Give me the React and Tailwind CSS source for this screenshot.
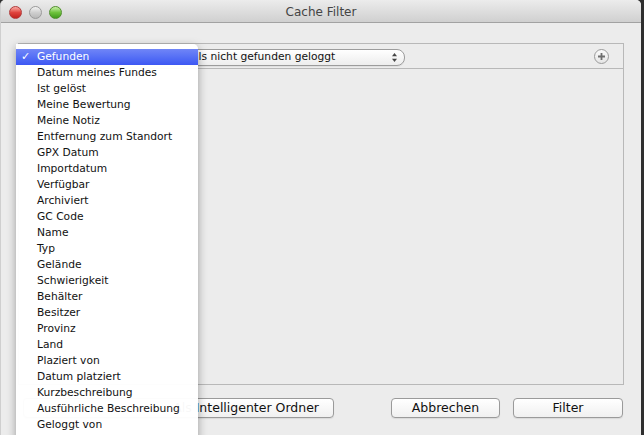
const items = [
  "Gefunden",
  "Datum meines Fundes",
  "Ist gelöst",
  "Meine Bewertung",
  "Meine Notiz",
  "Entfernung zum Standort",
  "GPX Datum",
  "Importdatum",
  "Verfügbar",
  "Archiviert",
  "GC Code",
  "Name",
  "Typ",
  "Gelände",
  "Schwierigkeit",
  "Behälter",
  "Besitzer",
  "Provinz",
  "Land",
  "Plaziert von",
  "Datum platziert",
  "Kurzbeschreibung",
  "Ausführliche Beschreibung",
  "Geloggt von",
];

export default function App() {
  return (
    <div className="w-[644px] h-[435px] overflow-hidden bg-[#2f2f2f] relative font-['DejaVu_Sans',sans-serif]">
      <div className="w-[641px] h-[435px] bg-[#ececec] rounded-t-[5px] flex flex-col overflow-hidden border-l border-[#cfcfcf]">
        {/* Title bar */}
        <div className="h-[23px] shrink-0 bg-gradient-to-b from-[#ececec] to-[#d0d0d0] border-b border-[#a2a2a2] flex items-center relative">
          <div className="flex items-center gap-[7px] ml-[8px] mt-[2px]">
            <div className="w-[13px] h-[13px] rounded-full border border-[#b03a3a] bg-gradient-to-b from-[#f7a8a5] via-[#e0443e] to-[#c1201b]" />
            <div className="w-[13px] h-[13px] rounded-full border border-[#9a9a9a] bg-gradient-to-b from-[#f4f4f4] via-[#cfcfcf] to-[#b8b8b8]" />
            <div className="w-[13px] h-[13px] rounded-full border border-[#4f8e2c] bg-gradient-to-b from-[#c8f0a4] via-[#6fc33d] to-[#3f9a1c]" />
          </div>
          <div className="absolute inset-0 flex items-center justify-center text-[12px] text-[#444] pt-[1px]">
            Cache Filter
          </div>
        </div>

        {/* Panel */}
        <div className="mt-[20px] ml-[17px] w-[606px] h-[342px] border border-[#b8b8b8] flex flex-col">
          <div className="h-[25px] border-b border-[#b8b8b8] flex items-start">
            <div className="ml-[166px] mt-[5px] w-[220px] h-[17px] rounded-[8px] border border-[#9c9c9c] bg-gradient-to-b from-[#ffffff] to-[#ededed] flex items-center pl-[6px] pr-[6px] text-[10.7px] text-[#111] shadow-[0_1px_0_rgba(0,0,0,0.05)]">
              <span className="flex-1 whitespace-nowrap overflow-hidden">als nicht gefunden geloggt</span>
              <svg width="7" height="11" viewBox="0 0 7 11">
                <path d="M3.5 1 L6 4.2 L1 4.2 Z" fill="#444" />
                <path d="M3.5 10 L6 6.8 L1 6.8 Z" fill="#444" />
              </svg>
            </div>
            <div className="ml-auto mr-[14px] self-center mt-[1px] w-[15px] h-[15px] rounded-full border border-[#9b9b9b] bg-gradient-to-b from-[#fafafa] to-[#e6e6e6] flex items-center justify-center">
              <svg width="9" height="9" viewBox="0 0 9 9">
                <path d="M4.5 1 V8 M1 4.5 H8" stroke="#6e6e6e" strokeWidth="1.8" />
              </svg>
            </div>
          </div>
        </div>

        {/* Buttons */}
        <div className="mt-[13px] ml-[17px] w-[606px] flex items-start text-[12.5px] text-[#111]">
          <div className="ml-[5px] w-[311px] h-[20px] rounded-[4px] border border-[#9a9a9a] bg-gradient-to-b from-[#ffffff] to-[#f0f0f0] flex items-center justify-end pr-[14px] whitespace-nowrap shadow-[0_1px_1px_rgba(0,0,0,0.08)]">
            Als Intelligenter Ordner
          </div>
          <div className="ml-[57px] w-[109px] h-[20px] rounded-[4px] border border-[#9a9a9a] bg-gradient-to-b from-[#ffffff] to-[#f0f0f0] flex items-center justify-center shadow-[0_1px_1px_rgba(0,0,0,0.08)]">
            Abbrechen
          </div>
          <div className="ml-[13px] w-[110px] h-[20px] rounded-[4px] border border-[#9a9a9a] bg-gradient-to-b from-[#ffffff] to-[#f0f0f0] flex items-center justify-center shadow-[0_1px_1px_rgba(0,0,0,0.08)]">
            Filter
          </div>
        </div>
      </div>

      {/* Popup menu */}
      <div className="absolute left-[16px] top-[44px] w-[182px] h-[400px] bg-[#ffffff]/[0.97] rounded-tr-[5px] shadow-[0_3px_10px_rgba(0,0,0,0.35)] pt-[5px] text-[10.7px] text-[#111]">
        {items.map((it, i) => (
          <div
            key={it}
            className={`h-[16px] flex items-center whitespace-nowrap pt-[1px] ${
              i === 0 ? "bg-gradient-to-b from-[#7085f7] to-[#3d57f3] text-white" : ""
            }`}
          >
            <span className="w-[21px] pl-[5px] text-[11px] font-bold">{i === 0 ? "✓" : ""}</span>
            <span>{it}</span>
          </div>
        ))}
      </div>
    </div>
  );
}
